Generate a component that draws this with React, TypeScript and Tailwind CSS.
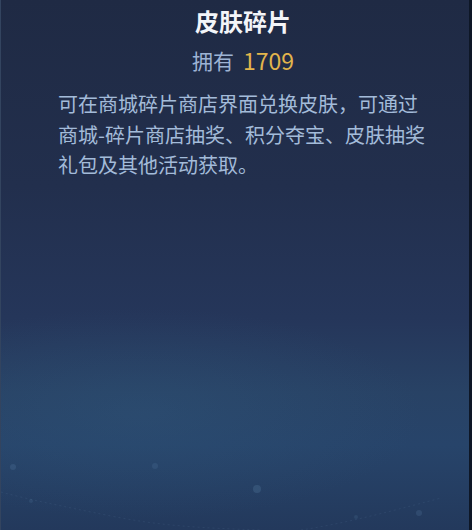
export default function App() {
  return (
    <div
      className="relative w-[472px] h-[530px] overflow-hidden flex flex-col items-center pl-[16px] border-l border-[#33445f] border-r-[3px] border-r-[#0e1726] bg-[radial-gradient(ellipse_60%_20%_at_30%_78%,rgba(48,88,124,0.35),transparent),linear-gradient(180deg,#1f2a44_0%,#222f4d_35%,#25365a_60%,#284265_74%,#27446a_84%,#23395c_100%)]"
      style={{ fontFamily: '"Noto Sans CJK SC", "Noto Sans", sans-serif' }}
    >
      <h1 className="mt-[4px] text-[24px] leading-[34px] font-bold text-[#f3f5f9]">
        皮肤碎片
      </h1>
      <p className="mt-[7px] text-[21px] leading-[30px] text-[#9db3d4] flex items-center">
        <span>拥有</span>
        <span className="ml-[9px] text-[23px] text-[#e2b54c]">1709</span>
      </p>
      <p className="self-stretch mt-[14px] pl-[41px] text-[20px] leading-[30.5px] text-[#a3bbd9]">
        可在商城碎片商店界面兑换皮肤，可通过
        <br />
        商城-碎片商店抽奖、积分夺宝、皮肤抽奖
        <br />
        礼包及其他活动获取。
      </p>

      <svg
        className="absolute left-0 bottom-0 w-[472px] h-[90px] pointer-events-none"
        viewBox="0 0 472 90"
        fill="none"
      >
        <path
          d="M0 52 C 30 60, 60 66, 110 76 S 200 88, 260 90"
          stroke="rgba(150,190,230,0.08)"
          strokeWidth="1"
          strokeDasharray="2 3"
        />
        <path
          d="M300 90 C 340 84, 380 74, 440 58"
          stroke="rgba(150,190,230,0.08)"
          strokeWidth="1"
          strokeDasharray="2 3"
        />
        <circle cx="12" cy="27" r="3" fill="rgba(140,190,230,0.12)" />
        <circle cx="154" cy="26" r="3" fill="rgba(140,190,230,0.1)" />
        <circle cx="256" cy="49" r="4" fill="rgba(140,190,230,0.14)" />
        <circle cx="30" cy="61" r="2" fill="rgba(140,190,230,0.1)" />
        <circle cx="355" cy="77" r="2" fill="rgba(140,190,230,0.1)" />
        <circle cx="418" cy="73" r="3" fill="rgba(140,190,230,0.12)" />
      </svg>
    </div>
  );
}
